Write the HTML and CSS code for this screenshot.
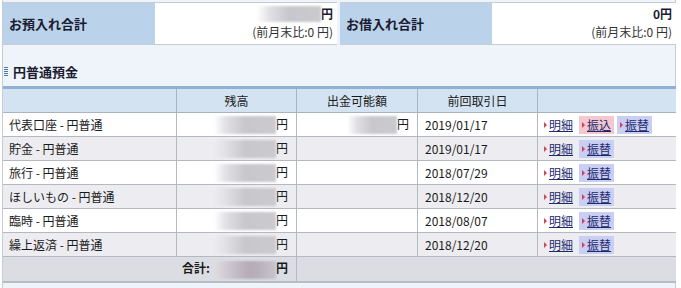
FILE: index.html
```html
<!DOCTYPE html>
<html lang="ja">
<head>
    <meta charset="UTF-8">
    <title>口座一覧</title>
    <link rel="stylesheet" href="styles.css">
</head>
<body>
    <div class="page">
        <div class="summary">
            <div class="sum-box">
                <div class="sum-label">お預入れ合計</div>
                <div class="sum-value">
                    <div class="sum-main"><span class="mask mask-top"></span>円</div>
                    <div class="sum-sub">(前月末比:0 円)</div>
                </div>
            </div>
            <div class="sum-box">
                <div class="sum-label">お借入れ合計</div>
                <div class="sum-value wide">
                    <div class="sum-main">0円</div>
                    <div class="sum-sub">(前月末比:0 円)</div>
                </div>
            </div>
        </div>

        <h2 class="section-title"><span class="title-icon"></span>円普通預金</h2>

        <table class="accounts">
            <thead>
                <tr>
                    <th class="col-name"></th>
                    <th class="col-bal">残高</th>
                    <th class="col-avail">出金可能額</th>
                    <th class="col-date">前回取引日</th>
                    <th class="col-act"></th>
                </tr>
            </thead>
            <tbody>
                <tr>
                    <td>代表口座 - 円普通</td>
                    <td class="num"><span class="mask"></span>円</td>
                    <td class="num"><span class="mask short"></span>円</td>
                    <td class="date">2019/01/17</td>
                    <td class="acts"><a href="#" class="act">明細</a><a href="#" class="act pink">振込</a><a href="#" class="act blue">振替</a></td>
                </tr>
                <tr class="alt">
                    <td>貯金 - 円普通</td>
                    <td class="num"><span class="mask"></span>円</td>
                    <td></td>
                    <td class="date">2019/01/17</td>
                    <td class="acts"><a href="#" class="act">明細</a><a href="#" class="act blue">振替</a></td>
                </tr>
                <tr>
                    <td>旅行 - 円普通</td>
                    <td class="num"><span class="mask"></span>円</td>
                    <td></td>
                    <td class="date">2018/07/29</td>
                    <td class="acts"><a href="#" class="act">明細</a><a href="#" class="act blue">振替</a></td>
                </tr>
                <tr class="alt">
                    <td>ほしいもの - 円普通</td>
                    <td class="num"><span class="mask"></span>円</td>
                    <td></td>
                    <td class="date">2018/12/20</td>
                    <td class="acts"><a href="#" class="act">明細</a><a href="#" class="act blue">振替</a></td>
                </tr>
                <tr>
                    <td>臨時 - 円普通</td>
                    <td class="num"><span class="mask"></span>円</td>
                    <td></td>
                    <td class="date">2018/08/07</td>
                    <td class="acts"><a href="#" class="act">明細</a><a href="#" class="act blue">振替</a></td>
                </tr>
                <tr class="alt">
                    <td>繰上返済 - 円普通</td>
                    <td class="num"><span class="mask"></span>円</td>
                    <td></td>
                    <td class="date">2018/12/20</td>
                    <td class="acts"><a href="#" class="act">明細</a><a href="#" class="act blue">振替</a></td>
                </tr>
                <tr class="total">
                    <td colspan="2" class="num strong">合計:<span class="mask dark"></span>円</td>
                    <td colspan="3"></td>
                </tr>
            </tbody>
        </table>
    </div>
</body>
</html>
```

FILE: styles.css
```css
body {
    margin: 0;
    padding: 0;
    background-color: #ffffff;
    font-family: "Noto Sans CJK JP", sans-serif;
    font-size: 12px;
    color: #1a1a1a;
}

.page {
    width: 674px;
    height: 288px;
    margin-left: 2px;
    border-left: 1px solid #c4ccd4;
    border-right: 1px solid #c4ccd4;
    background-color: #eef4fa;
    padding-top: 2px;
    box-sizing: border-box;
}

.summary {
    display: flex;
    gap: 3px;
}

.sum-box {
    display: flex;
    height: 41px;
    border-top: 1px solid #c4ccd4;
    border-bottom: 1px solid #c4ccd4;
}

.sum-label {
    width: 152px;
    background-color: #bad3ea;
    font-weight: bold;
    font-size: 13px;
    color: #1a1a30;
    display: flex;
    align-items: center;
    padding-left: 6px;
    box-sizing: border-box;
}

.sum-value {
    width: 182px;
    background-color: #ffffff;
    text-align: right;
    padding-right: 4px;
    box-sizing: border-box;
}

.sum-value.wide {
    width: 184px;
}

.sum-main {
    font-weight: bold;
    height: 18px;
    line-height: 18px;
    display: flex;
    justify-content: flex-end;
    align-items: center;
    margin-top: 2px;
    color: #1a1a30;
}

.sum-sub {
    line-height: 18px;
    color: #333;
}

.section-title {
    margin: 15px 0 0 0;
    font-size: 13px;
    font-weight: bold;
    height: 24px;
    line-height: 24px;
    color: #1a1a30;
    display: flex;
    align-items: center;
}

.title-icon {
    width: 4px;
    height: 10px;
    margin: 0 5px 0 1px;
    background: repeating-linear-gradient(#4a78b0 0 1px, transparent 1px 2px);
}

.accounts {
    width: 673px;
    border-collapse: collapse;
    margin-top: 2px;
    border-top: 3px solid #8fb0d2;
    border-bottom: 2px solid #b4bcc6;
}

.accounts th {
    height: 23px;
    padding: 0;
    background-color: #d4e3f2;
    font-weight: normal;
    text-align: center;
    border-left: 1px solid #aab4c0;
    border-bottom: 1px solid #aab4c0;
}

.accounts th:first-child {
    border-left: none;
}

.col-name { width: 173px; }
.col-bal { width: 119px; }
.col-avail { width: 120px; }
.col-date { width: 119px; }

.accounts td {
    height: 23px;
    padding: 0 0 0 6px;
    background-color: #ffffff;
    border-left: 1px solid #b4b8c0;
    border-bottom: 1px solid #b4b8c0;
    white-space: nowrap;
}

.accounts td:first-child {
    border-left: none;
}

.accounts tr.alt td {
    background-color: #ededf1;
}

.accounts td.num {
    text-align: right;
    padding: 0 8px 0 0;
}

.accounts td.date {
    padding-left: 7px;
}

.accounts td.acts {
    padding-left: 3px;
}

.accounts tr.total td {
    background-color: #dcdde2;
    height: 24px;
    border-bottom: none;
}

.strong {
    font-weight: bold;
}

.mask {
    display: inline-block;
    width: 62px;
    height: 18px;
    vertical-align: middle;
    margin-left: 4px;
    background: linear-gradient(90deg, rgba(220,220,224,0) 0%, #e0e0e4 20%, #c8c8cc 50%, #cbcbcf 100%);
    filter: blur(1px);
}

.mask.short {
    width: 50px;
}

.mask.dark {
    background: linear-gradient(90deg, #e0dde2 0%, #c0b8c2 40%, #b4aab8 60%, #c8c4cc 100%);
}

.mask-top {
    width: 64px;
    height: 16px;
    margin-right: 0;
}

.act {
    display: inline-block;
    color: #1c2a6e;
    text-decoration: underline;
    padding: 1px 3px 1px 8px;
    margin-right: 3px;
    position: relative;
    line-height: 16px;
}

.act::before {
    content: "";
    position: absolute;
    left: 3px;
    top: 6px;
    border-left: 3px solid #d04060;
    border-top: 3px solid transparent;
    border-bottom: 3px solid transparent;
}

.act.pink {
    background-color: #f5c8cf;
}

.act.blue {
    background-color: #cacef2;
}
```
